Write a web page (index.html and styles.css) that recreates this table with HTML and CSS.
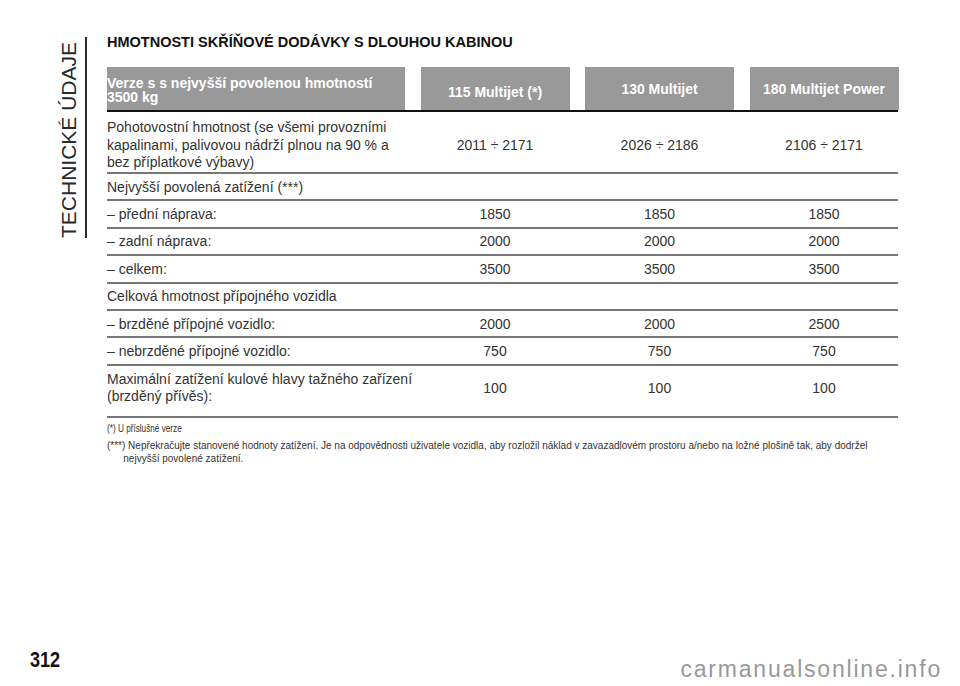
FILE: index.html
```html
<!DOCTYPE html>
<html lang="cs">
<head>
<meta charset="utf-8">
<title>Technické údaje 312</title>
<link rel="stylesheet" href="styles.css">
</head>
<body>
<div class="page">
  <div class="main">
    <aside class="side"><div class="side-label">TECHNICKÉ ÚDAJE</div></aside>
    <section class="content">
      <h1 class="title">HMOTNOSTI SKŘÍŇOVÉ DODÁVKY S DLOUHOU KABINOU</h1>
      <div class="table">
        <div class="thead">
          <div class="th th-first"><span>Verze s s nejvyšší povolenou hmotností<br>3500 kg</span></div>
          <div class="th th-low">115 Multijet (*)</div>
          <div class="th th-mid">130 Multijet</div>
          <div class="th th-mid">180 Multijet Power</div>
        </div>
        <div class="tr tr-tall">
          <div class="lbl">Pohotovostní hmotnost (se všemi provozními<br>kapalinami, palivovou nádrží plnou na 90 % a<br>bez příplatkové výbavy)</div>
          <div class="td">2011 ÷ 2171</div>
          <div class="td">2026 ÷ 2186</div>
          <div class="td">2106 ÷ 2171</div>
        </div>
        <div class="tr">
          <div class="lbl">Nejvyšší povolená zatížení (***)</div>
          <div class="td"></div><div class="td"></div><div class="td"></div>
        </div>
        <div class="tr">
          <div class="lbl">– přední náprava:</div>
          <div class="td">1850</div><div class="td">1850</div><div class="td">1850</div>
        </div>
        <div class="tr">
          <div class="lbl">– zadní náprava:</div>
          <div class="td">2000</div><div class="td">2000</div><div class="td">2000</div>
        </div>
        <div class="tr">
          <div class="lbl">– celkem:</div>
          <div class="td">3500</div><div class="td">3500</div><div class="td">3500</div>
        </div>
        <div class="tr">
          <div class="lbl">Celková hmotnost přípojného vozidla</div>
          <div class="td"></div><div class="td"></div><div class="td"></div>
        </div>
        <div class="tr">
          <div class="lbl">– brzděné přípojné vozidlo:</div>
          <div class="td">2000</div><div class="td">2000</div><div class="td">2500</div>
        </div>
        <div class="tr">
          <div class="lbl">– nebrzděné přípojné vozidlo:</div>
          <div class="td">750</div><div class="td">750</div><div class="td">750</div>
        </div>
        <div class="tr tr-last">
          <div class="lbl">Maximální zatížení kulové hlavy tažného zařízení<br>(brzděný přívěs):</div>
          <div class="td">100</div><div class="td">100</div><div class="td">100</div>
        </div>
      </div>
      <div class="notes">
        <p class="note note-short">(*) U příslušné verze</p>
        <p class="note note-hang">(***) Nepřekračujte stanovené hodnoty zatížení. Je na odpovědnosti uživatele vozidla, aby rozložil náklad v zavazadlovém prostoru a/nebo na ložné plošině tak, aby dodržel<br>nejvyšší povolené zatížení.</p>
      </div>
    </section>
  </div>
  <footer class="foot">
    <div class="pagenum">312</div>
    <div class="watermark">carmanualsonline.info</div>
  </footer>
</div>
</body>
</html>
```
FILE: styles.css
```css
html, body {
  margin: 0;
  padding: 0;
  background: #ffffff;
}

body {
  font-family: "Liberation Sans", Arial, Helvetica, sans-serif;
  color: #333333;
}

.page {
  width: 960px;
  height: 686px;
  display: flex;
  flex-direction: column;
  overflow: hidden;
}

.main {
  flex: 1;
  display: flex;
  align-items: flex-start;
  padding-top: 34px;
}

.side {
  margin-left: 55px;
  margin-top: 3px;
  width: 24px;
  padding-right: 6px;
  height: 201px;
  border-right: 2px solid #2a2a2a;
  display: flex;
  justify-content: flex-end;
}

.side-label {
  writing-mode: vertical-rl;
  transform: rotate(180deg);
  font-size: 21px;
  line-height: 21px;
  color: #2a2a2a;
  white-space: nowrap;
}

.content {
  margin-left: 20px;
  width: 791px;
}

.title {
  margin: 0;
  font-size: 14.5px;
  line-height: 17px;
  font-weight: 700;
  color: #111111;
}

.table {
  margin-top: 16px;
}

.thead,
.tr {
  display: grid;
  grid-template-columns: 298px 149px 149px 149px;
  column-gap: 15.5px;
}

.thead {
  height: 42.7px;
  border-bottom: 2px solid #111111;
}

.th {
  background: #999999;
  color: #ffffff;
  font-weight: 700;
  font-size: 14px;
  line-height: 13.8px;
  display: flex;
  align-items: center;
  justify-content: center;
  text-align: center;
  white-space: nowrap;
}

.th-first {
  justify-content: flex-start;
  align-items: flex-end;
  text-align: left;
  padding-bottom: 5px;
}

.th-low {
  padding-top: 9px;
}

.th-mid {
  padding-top: 4px;
}

.tr {
  align-items: center;
  padding: 4.6px 0 3px;
  border-bottom: 2px solid #777777;
  font-size: 14px;
  line-height: 17.8px;
  color: #333333;
}

.tr-tall {
  padding: 7.6px 0 0;
  line-height: 17.6px;
}

.tr-last {
  padding: 5.4px 0 10.4px;
  line-height: 17.3px;
}

.lbl {
  white-space: nowrap;
}

.td {
  text-align: center;
  white-space: nowrap;
}

.notes {
  margin-top: 4px;
}

.note {
  margin: 0;
  font-family: "Liberation Sans", Arial, sans-serif;
  font-size: 10px;
  line-height: 13.5px;
  color: #333333;
  white-space: nowrap;
}

.note-short {
  transform: scaleX(0.82);
  transform-origin: left center;
}

.note-hang {
  margin-top: 3px;
  padding-left: 16.3px;
  text-indent: -16.3px;
}

.foot {
  height: 37px;
  flex: none;
  display: flex;
  justify-content: space-between;
  align-items: flex-start;
  padding: 0 18px 0 30px;
}

.pagenum {
  font-family: "Liberation Sans", Arial, sans-serif;
  font-weight: 700;
  font-size: 22px;
  line-height: 22px;
  color: #111111;
  transform: scaleX(0.82);
  transform-origin: left center;
}

.watermark {
  margin-top: 8.5px;
  font-size: 23px;
  line-height: 23px;
  letter-spacing: 1.8px;
  color: #999999;
}
```
